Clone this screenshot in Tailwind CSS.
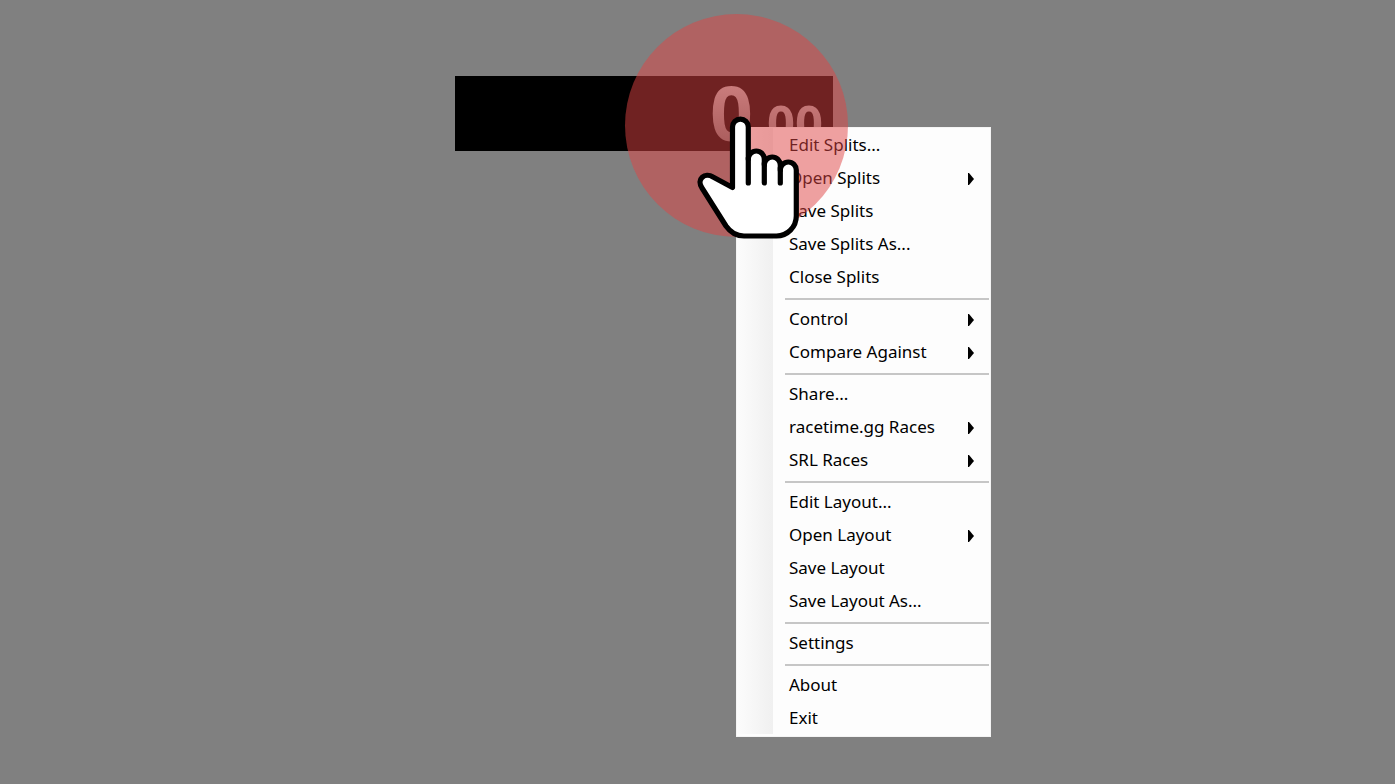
<!DOCTYPE html>
<html lang="en">
<head>
<meta charset="utf-8">
<meta name="viewport" content="width=device-width, initial-scale=1">
<title>LiveSplit</title>
<script src="https://cdn.jsdelivr.net/npm/@tailwindcss/browser@4"></script>
</head>
<body class="bg-[#808080]">
<main class="relative min-h-screen overflow-hidden font-['Noto_Sans',sans-serif] text-black">
  <!-- Timer window -->
  <section aria-label="Timer" class="absolute left-[455px] top-[76px] flex h-[75px] w-[378px] items-baseline justify-end overflow-hidden bg-black pr-[10px] font-['Open_Sans',sans-serif] font-bold leading-[73px]">
    <span class="bg-linear-to-b from-[#c0c0c0] to-[#707070] bg-clip-text text-[75px] text-transparent">0</span><span class="bg-linear-to-b from-[#c0c0c0] to-[#707070] bg-clip-text text-[49px] text-transparent">.00</span>
  </section>

  <!-- Context menu -->
  <nav aria-label="Timer menu" class="absolute left-[736px] top-[127px] w-[255px] border border-[#f4f4f4] bg-[#fdfdfd] pb-[2px] text-[17px]">
    <div class="bg-linear-to-r from-[#fcfcfc] to-[#f0f0f0] bg-[length:36px_100%] bg-no-repeat">
      <div>
        <button class="flex h-[33px] w-full items-center pl-[52px]">Edit Splits...</button>
        <button class="flex h-[33px] w-full items-center justify-between pl-[52px] pr-[16px]">Open Splits<svg class="mt-[3px]" width="6" height="12" viewBox="0 0 6 12"><path d="M0 0H1L6 6L1 12H0Z"/></svg></button>
        <button class="flex h-[33px] w-full items-center pl-[52px]">Save Splits</button>
        <button class="flex h-[33px] w-full items-center pl-[52px]">Save Splits As...</button>
        <button class="flex h-[33px] w-full items-center pl-[52px]">Close Splits</button>
      </div>
      <hr class="mt-[5px] mb-[2px] ml-[48px] mr-px border-t-2 border-[#c6c6c6]">
      <div>
        <button class="flex h-[33px] w-full items-center justify-between pl-[52px] pr-[16px]">Control<svg class="mt-[3px]" width="6" height="12" viewBox="0 0 6 12"><path d="M0 0H1L6 6L1 12H0Z"/></svg></button>
        <button class="flex h-[33px] w-full items-center justify-between pl-[52px] pr-[16px]">Compare Against<svg class="mt-[3px]" width="6" height="12" viewBox="0 0 6 12"><path d="M0 0H1L6 6L1 12H0Z"/></svg></button>
      </div>
      <hr class="mt-[5px] mb-[2px] ml-[48px] mr-px border-t-2 border-[#c6c6c6]">
      <div>
        <button class="flex h-[33px] w-full items-center pl-[52px]">Share...</button>
        <button class="flex h-[33px] w-full items-center justify-between pl-[52px] pr-[16px]">racetime.gg Races<svg class="mt-[3px]" width="6" height="12" viewBox="0 0 6 12"><path d="M0 0H1L6 6L1 12H0Z"/></svg></button>
        <button class="flex h-[33px] w-full items-center justify-between pl-[52px] pr-[16px]">SRL Races<svg class="mt-[3px]" width="6" height="12" viewBox="0 0 6 12"><path d="M0 0H1L6 6L1 12H0Z"/></svg></button>
      </div>
      <hr class="mt-[5px] mb-[2px] ml-[48px] mr-px border-t-2 border-[#c6c6c6]">
      <div>
        <button class="flex h-[33px] w-full items-center pl-[52px]">Edit Layout...</button>
        <button class="flex h-[33px] w-full items-center justify-between pl-[52px] pr-[16px]">Open Layout<svg class="mt-[3px]" width="6" height="12" viewBox="0 0 6 12"><path d="M0 0H1L6 6L1 12H0Z"/></svg></button>
        <button class="flex h-[33px] w-full items-center pl-[52px]">Save Layout</button>
        <button class="flex h-[33px] w-full items-center pl-[52px]">Save Layout As...</button>
      </div>
      <hr class="mt-[5px] mb-[2px] ml-[48px] mr-px border-t-2 border-[#c6c6c6]">
      <button class="flex h-[33px] w-full items-center pl-[52px]">Settings</button>
      <hr class="mt-[5px] mb-[2px] ml-[48px] mr-px border-t-2 border-[#c6c6c6]">
      <div>
        <button class="flex h-[33px] w-full items-center pl-[52px]">About</button>
        <button class="flex h-[33px] w-full items-center pl-[52px]">Exit</button>
      </div>
    </div>
  </nav>

  <!-- Click highlight and hand pointer -->
  <div class="pointer-events-none absolute left-[625px] top-[14px] size-[223px] rounded-full bg-[#e04444]/50"></div>
  <svg class="pointer-events-none absolute left-[690px] top-[110px]" width="120" height="135" viewBox="690 110 120 135" fill="#fff" stroke="#000" stroke-width="5.2" stroke-linecap="round" stroke-linejoin="round" aria-hidden="true">
    <path d="M732.5 187.500V127a7.900 7.900 0 0 1 15.800 0V159a8 8 0 0 1 16 0V165a8 8 0 0 1 16 0V170a8 8 0 0 1 16 0V216A20 20 0 0 1 776.500 236H744Q733 236 726 226L702 188C696 179 705 172 713 177Z"/>
    <path fill="none" d="M748.300 158V183M764.300 163V183M780.300 168V183"/>
  </svg>
</main>
</body>
</html>
